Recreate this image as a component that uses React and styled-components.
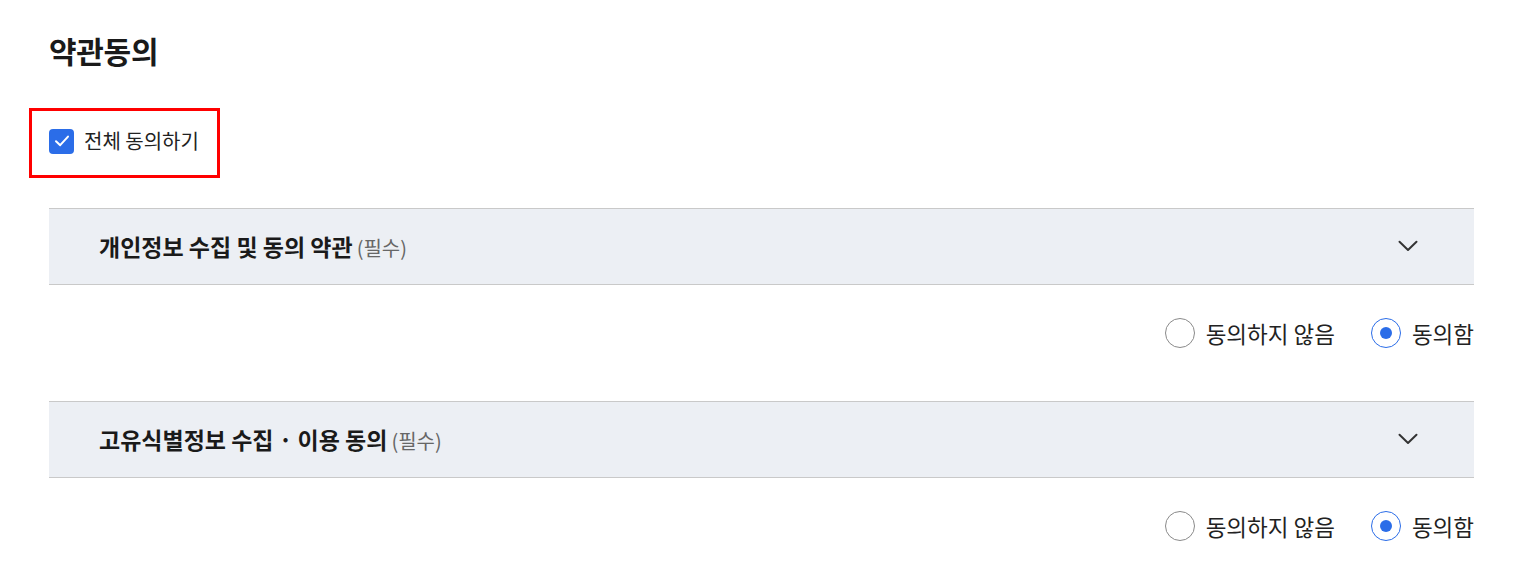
import React, { useState } from "react";
import styled, { createGlobalStyle } from "styled-components";

const Global = createGlobalStyle`
  html, body { margin: 0; padding: 0; background: #fff; }
  body { font-family: "Noto Sans CJK KR", "Noto Sans", sans-serif; color: #222; }
  * { box-sizing: border-box; }
`;

const Page = styled.div`
  padding: 26px 55px 0 49px;
`;

const Heading = styled.h2`
  margin: 0;
  font-size: 30px;
  font-weight: 700;
  line-height: 48px;
  color: #1a1a1a;
  letter-spacing: -0.3px;
`;

const Highlight = styled.div`
  display: inline-flex;
  margin: 34px 0 0 -20px;
  padding: 17px 18px 21px 17px;
  border: 3px solid #ff0000;
`;

const CheckLabel = styled.label`
  display: flex;
  align-items: center;
  gap: 10px;
  font-size: 20px;
  line-height: 26px;
  color: #222;
  cursor: pointer;
`;

const CheckBox = styled.span`
  width: 25px;
  height: 25px;
  border-radius: 4px;
  background: ${(p) => (p.$checked ? "#2b6de8" : "#fff")};
  border: ${(p) => (p.$checked ? "none" : "1px solid #888")};
  display: flex;
  align-items: center;
  justify-content: center;
`;

const Sections = styled.div`
  margin-top: 30px;
`;

const AccordionHeader = styled.div`
  display: flex;
  align-items: center;
  justify-content: space-between;
  height: 77px;
  padding: 0 56px 2px 50px;
  background: #eceff4;
  border-top: 1px solid #c9c9c9;
  border-bottom: 1px solid #c9c9c9;
`;

const Title = styled.div`
  font-size: 23px;
  font-weight: 700;
  color: #1a1a1a;
  display: flex;
  align-items: baseline;
  gap: 4px;
`;

const Required = styled.span`
  font-size: 20px;
  font-weight: 400;
  color: #666;
`;

const RadioRow = styled.div`
  display: flex;
  justify-content: flex-end;
  align-items: center;
  gap: 36px;
  padding: 33px 0 53px 0;
`;

const RadioLabel = styled.label`
  display: flex;
  align-items: center;
  gap: 11px;
  font-size: 22.5px;
  line-height: 30px;
  color: #222;
  cursor: pointer;
`;

const RadioCircle = styled.span`
  width: 30px;
  height: 30px;
  border-radius: 50%;
  border: ${(p) => (p.$checked ? "1.5px solid #2b6de8" : "1px solid #8a8a8a")};
  display: flex;
  align-items: center;
  justify-content: center;
  background: #fff;
  &::after {
    content: "";
    width: 12px;
    height: 12px;
    border-radius: 50%;
    background: ${(p) => (p.$checked ? "#2b6de8" : "transparent")};
  }
`;

const Chevron = () => (
  <svg width="20" height="12" viewBox="0 0 20 12" fill="none">
    <path d="M1.5 1.8 L10 10 L18.5 1.8" stroke="#333" strokeWidth="2" strokeLinecap="round" strokeLinejoin="round" />
  </svg>
);

const Radio = ({ checked, label, onClick }) => (
  <RadioLabel onClick={onClick}>
    <RadioCircle $checked={checked} />
    {label}
  </RadioLabel>
);

const Section = ({ title }) => {
  const [agree, setAgree] = useState(true);
  return (
    <div>
      <AccordionHeader>
        <Title>
          {title}
          <Required>(필수)</Required>
        </Title>
        <Chevron />
      </AccordionHeader>
      <RadioRow>
        <Radio checked={!agree} label="동의하지 않음" onClick={() => setAgree(false)} />
        <Radio checked={agree} label="동의함" onClick={() => setAgree(true)} />
      </RadioRow>
    </div>
  );
};

export default function App() {
  const [all, setAll] = useState(true);
  return (
    <>
      <Global />
      <Page>
        <Heading>약관동의</Heading>
        <Highlight>
          <CheckLabel onClick={() => setAll(!all)}>
            <CheckBox $checked={all}>
              {all && (
                <svg width="20" height="20" viewBox="0 0 20 20" fill="none">
                  <path d="M4 10.2 L8.2 14.2 L16 5.6" stroke="#fff" strokeWidth="2" strokeLinecap="round" strokeLinejoin="round" />
                </svg>
              )}
            </CheckBox>
            전체 동의하기
          </CheckLabel>
        </Highlight>
        <Sections>
          <Section title="개인정보 수집 및 동의 약관" />
          <Section title="고유식별정보 수집 · 이용 동의" />
        </Sections>
      </Page>
    </>
  );
}
